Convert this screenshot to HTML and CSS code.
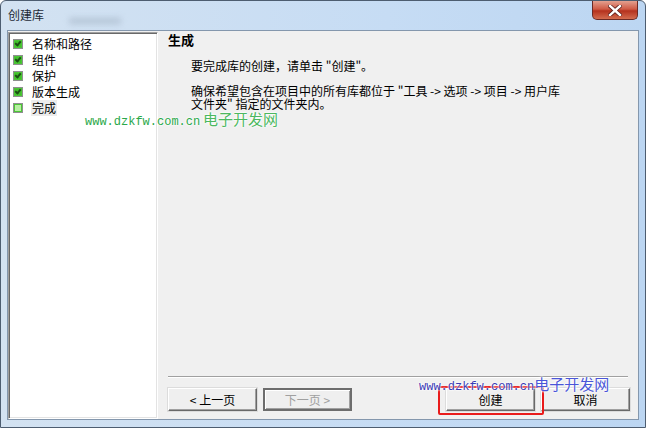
FILE: index.html
```html
<!DOCTYPE html>
<html lang="zh-CN">
<head>
    <meta charset="UTF-8">
    <title>创建库</title>
    <link rel="stylesheet" href="styles.css">
</head>
<body>
    <div class="window">
        <div class="titlebar">
            <span class="title">创建库</span>
            <span class="smudge"></span>
            <button class="close-button">
                <svg width="14" height="11" viewBox="0 0 14 11">
                    <path d="M2 1 L12 10 M12 1 L2 10" stroke="#5a1d1a" stroke-width="4" stroke-linecap="square"/>
                    <path d="M2 1 L12 10 M12 1 L2 10" stroke="#ffffff" stroke-width="2.4" stroke-linecap="square"/>
                </svg>
            </button>
        </div>
        <div class="client">
            <div class="steps">
                <div class="step"><span class="check on"></span>名称和路径</div>
                <div class="step"><span class="check on"></span>组件</div>
                <div class="step"><span class="check on"></span>保护</div>
                <div class="step"><span class="check on"></span>版本生成</div>
                <div class="step"><span class="check"></span><span class="current">完成</span></div>
            </div>
            <div class="page">
                <h1>生成</h1>
                <p class="text first">要完成库的创建，请单击 "创建"。</p>
                <p class="text">确保希望包含在项目中的所有库都位于 "工具 -&gt; 选项 -&gt; 项目 -&gt; 用户库<br>文件夹" 指定的文件夹内。</p>
                <div class="spacer"></div>
                <div class="separator"></div>
                <div class="button-row">
                    <button class="btn">&lt; 上一页</button>
                    <button class="btn disabled">下一页 &gt;</button>
                    <div class="spacer"></div>
                    <button class="btn">创建</button>
                    <button class="btn">取消</button>
                </div>
            </div>
        </div>
        <div class="highlight"></div>
        <div class="watermark green"><span class="url">www.dzkfw.com.cn</span> <span class="cn">电子开发网</span></div>
        <div class="watermark blue"><span class="url">www.dzkfw.com.cn</span><span class="cn">电子开发网</span></div>
    </div>
</body>
</html>
```

FILE: styles.css
```css
body {
    margin: 0;
    padding: 0;
    font-family: "Noto Sans CJK SC", "Liberation Sans", sans-serif;
    font-size: 12px;
    color: #000;
    background: #fff;
}
.window {
    position: relative;
    width: 646px;
    height: 428px;
    box-sizing: border-box;
    border: 1px solid #4d5d70;
    border-radius: 6px 6px 0 0;
    background: linear-gradient(to right, #d3e2f1, #c6dcf4 60%, #bcd6f2);
    padding: 0 6px 7px 6px;
    display: flex;
    flex-direction: column;
    overflow: hidden;
}
.titlebar {
    height: 29px;
    display: flex;
    align-items: flex-start;
    position: relative;
}
.title {
    margin-top: 6px;
    margin-left: 1px;
    font-size: 12px;
    line-height: 16px;
    color: #1e2a36;
}
.smudge {
    position: absolute;
    left: 62px;
    top: 17px;
    width: 52px;
    height: 6px;
    background: #a8b8ca;
    filter: blur(3px);
    opacity: 0.7;
}
.close-button {
    margin-left: auto;
    margin-right: 1px;
    width: 46px;
    height: 19px;
    border: 1px solid #6b2a25;
    border-top: none;
    border-radius: 0 0 5px 5px;
    background: linear-gradient(to bottom, #e3a08f, #cf5a45 45%, #b5321e 55%, #d36c4f);
    display: flex;
    align-items: center;
    justify-content: center;
    padding: 0;
}
.client {
    flex: 1;
    display: flex;
    border: 1px solid #8497ad;
    background: #f0f0f0;
}
.steps {
    width: 150px;
    margin-top: 1px;
    box-sizing: border-box;
    background: #fff;
    border-top: 1px solid #a0a0a0;
    border-left: 1px solid #a0a0a0;
    border-right: 1px solid #fff;
    border-bottom: 1px solid #fff;
    box-shadow: inset 1px 1px 0 #696969, inset -1px -1px 0 #e3e3e3;
    padding: 3px 0 0 4px;
}
.step {
    height: 16px;
    display: flex;
    align-items: center;
    line-height: 16px;
}
.check {
    width: 8px;
    height: 8px;
    border: 1px solid #8e8f8f;
    background: #b7f0a2;
    box-shadow: inset 0 0 0 1px #4cc636;
    margin-right: 9px;
    position: relative;
    flex: none;
}
.check.on {
    background: #41c02b;
}
.check.on::after {
    content: "";
    position: absolute;
    left: 2px;
    top: 0px;
    width: 2px;
    height: 4px;
    border-right: 2px solid #1c4f14;
    border-bottom: 2px solid #1c4f14;
    transform: rotate(40deg);
}
.current {
    background: #ececec;
    padding: 0 1px;
    margin-left: -1px;
}
.page {
    flex: 1;
    display: flex;
    flex-direction: column;
    padding: 1px 8px 8px 10px;
}
h1 {
    margin: 0;
    font-size: 13px;
    font-weight: bold;
    line-height: 16px;
}
.text {
    margin: 0 0 0 23px;
    line-height: 13px;
}
.text.first {
    margin-top: 11px;
    margin-bottom: 12px;
}
.spacer {
    flex: 1;
}
.separator {
    height: 1px;
    background: #a0a0a0;
    border-bottom: 1px solid #fff;
    margin-right: 2px;
    margin-bottom: 10px;
}
.button-row {
    display: flex;
    gap: 6px;
}
.btn {
    width: 89px;
    height: 23px;
    box-sizing: border-box;
    font-family: "Noto Sans CJK SC", "Liberation Sans", sans-serif;
    font-size: 12px;
    color: #000;
    background: #efefef;
    border-top: 1px solid #fff;
    border-left: 1px solid #fff;
    border-right: 1px solid #696969;
    border-bottom: 1px solid #696969;
    box-shadow: inset -1px -1px 0 #a0a0a0, 0 0 0 1px #dcdcdc;
    padding: 0;
}
.btn.disabled {
    color: #a0a0a0;
    border: 2px solid #6d6d6d;
    box-shadow: inset 1px 1px 0 #fff, inset -1px -1px 0 #a0a0a0;
}
.highlight {
    position: absolute;
    left: 437px;
    top: 385px;
    width: 102px;
    height: 25px;
    border: 2px solid #e91b1b;
    border-radius: 2px;
}
.watermark {
    position: absolute;
    white-space: nowrap;
    text-shadow: 0 0 2px #fff, 0 0 2px #fff, 0 0 3px #fff;
}
.watermark .url {
    font-family: "Liberation Mono", monospace;
    font-size: 12px;
}
.watermark .cn {
    font-family: "Noto Sans CJK SC", sans-serif;
    font-size: 15px;
}
.watermark.green {
    left: 84px;
    top: 107px;
    color: #2aa84a;
}
.watermark.green .cn {
    color: #4cb860;
}
.watermark.blue {
    left: 418px;
    top: 372px;
    color: #3a3ab5;
}
.watermark.blue .cn {
    color: #4a56d8;
}
```
